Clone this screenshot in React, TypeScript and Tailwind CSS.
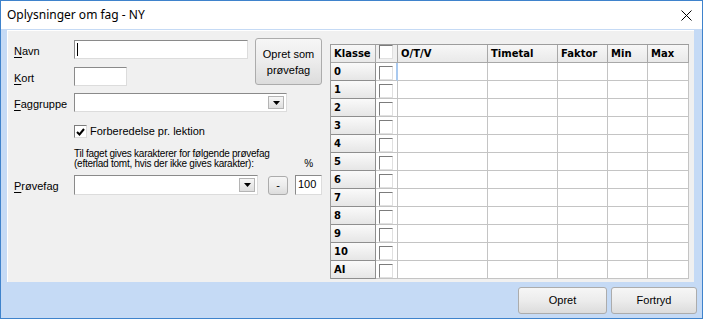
import type { ReactNode } from 'react'

const ROWS = ['0', '1', '2', '3', '4', '5', '6', '7', '8', '9', '10', 'AI']

// column widths in px, right border included
const COLS = [
  { label: 'Klasse', w: 'w-[45px]' },
  { label: '', w: 'w-[22px]' },
  { label: 'O/T/V', w: 'w-[90px]' },
  { label: 'Timetal', w: 'w-[70px]' },
  { label: 'Faktor', w: 'w-[50px]' },
  { label: 'Min', w: 'w-[40px]' },
  { label: 'Max', w: 'w-[41px]' },
]

function Label({ k, rest }: { k: string; rest: string }) {
  return (
    <span className="w-[60px] shrink-0 pt-[3px] text-[11px] text-black">
      <span className="underline underline-offset-[2px]">{k}</span>
      {rest}
    </span>
  )
}

function Sunken({ className, children }: { className: string; children?: ReactNode }) {
  return (
    <div
      className={`bg-white border border-[#dcdcdc] border-t-[#8a8a8a] border-l-[#8a8a8a] ${className}`}
    >
      {children}
    </div>
  )
}

function Arrow() {
  return (
    <svg width="7" height="4" viewBox="0 0 7 4">
      <polygon points="0,0 7,0 3.5,4" fill="#000" />
    </svg>
  )
}

function Combo({ className }: { className: string }) {
  return (
    <Sunken className={`flex justify-end items-stretch p-[2px] ${className}`}>
      <div className="w-[16px] flex items-center justify-center border border-[#b4b4b4] bg-gradient-to-b from-[#f7f7f7] to-[#dedede]">
        <Arrow />
      </div>
    </Sunken>
  )
}

function WinButton({ className, children }: { className: string; children: ReactNode }) {
  return (
    <div
      className={`flex items-center justify-center text-center rounded-[3px] border border-[#acacac] bg-gradient-to-b from-[#f6f6f6] via-[#ececec] to-[#dcdcdc] text-[11px] text-black ${className}`}
    >
      {children}
    </div>
  )
}

function GridBox({ focus }: { focus?: boolean }) {
  return (
    <div
      className={`w-[22px] h-[18px] shrink-0 border-b border-r ${
        focus ? 'border-r-[#a9c9ef] border-r-2' : 'border-r-[#c4c4c4]'
      } border-b-[#c4c4c4] bg-white pl-[3px] pt-[3px]`}
    >
      <div className="w-[14px] h-[14px] bg-white border border-[#e0e0e0] border-t-[#7c7c7c] border-l-[#7c7c7c]" />
    </div>
  )
}

export default function App() {
  return (
    <div
      className="w-[703px] h-[319px] bg-[#c5daf5] border border-[#3f83cc] flex flex-col overflow-hidden"
      style={{ fontFamily: '"Liberation Sans", Arial, sans-serif' }}
    >
      {/* Title bar */}
      <div className="h-[28px] shrink-0 bg-white flex items-center justify-between pl-[6px] pr-[10px]">
        <span className="text-[12px] text-black" style={{ fontFamily: '"Noto Sans", sans-serif' }}>
          Oplysninger om fag - NY
        </span>
        <svg width="11" height="11" viewBox="0 0 11 11">
          <path d="M0.5 0.5 L10.5 10.5 M10.5 0.5 L0.5 10.5" stroke="#000" strokeWidth="1" />
        </svg>
      </div>

      {/* Main panel */}
      <div className="mt-[1px] ml-[6px] w-[687px] h-[252px] shrink-0 bg-[#f0f0f0] border-t border-l border-white flex pl-[6px]">
        {/* Form */}
        <div className="w-[316px] shrink-0 flex flex-col pt-[9px]">
          <div className="flex items-start">
            <div className="flex flex-col">
              <div className="flex h-[19px]">
                <Label k="N" rest="avn" />
                <Sunken className="w-[174px] h-[19px] pl-[2px] pt-[2px]">
                  <div className="w-px h-[13px] bg-black" />
                </Sunken>
              </div>
              <div className="flex h-[19px] mt-[8px]">
                <Label k="K" rest="ort" />
                <Sunken className="w-[53px] h-[19px]" />
              </div>
            </div>
            <WinButton className="ml-[7px] -mt-[2px] w-[67px] h-[47px] leading-[16px]">
              Opret som
              <br />
              prøvefag
            </WinButton>
          </div>

          <div className="flex h-[19px] mt-[7px]">
            <Label k="F" rest="aggruppe" />
            <Combo className="w-[213px] h-[19px]" />
          </div>

          <div className="flex items-center mt-[13px] ml-[60px] h-[13px]">
            <div className="w-[13px] h-[13px] bg-white border border-[#dcdcdc] border-t-[#7c7c7c] border-l-[#7c7c7c] flex items-center justify-center">
              <svg width="9" height="8" viewBox="0 0 9 8">
                <path d="M1 4 L3.5 6.5 L8 1" stroke="#000" strokeWidth="2" fill="none" />
              </svg>
            </div>
            <span className="ml-[3px] text-[11px] text-black">Forberedelse pr. lektion</span>
          </div>

          <div className="mt-[11px] ml-[60px] w-[239px] text-[10px] leading-[10px] text-black tracking-[-0.25px]">
            <div>Til faget gives karakterer for følgende prøvefag</div>
            <div className="flex justify-between">
              <span>(efterlad tomt, hvis der ikke gives karakter):</span>
              <span>%</span>
            </div>
          </div>

          <div className="flex h-[20px] mt-[6px]">
            <Label k="P" rest="røvefag" />
            <Combo className="w-[184px] h-[20px]" />
            <WinButton className="ml-[10px] mt-[1px] w-[20px] h-[19px] rounded-[2px]">-</WinButton>
            <Sunken className="ml-[7px] w-[27px] h-[20px] text-[11px] leading-[16px] pl-[2px] text-black">
              100
            </Sunken>
          </div>
        </div>

        {/* Grid */}
        <div
          className="mt-[13px] w-[359px] h-[235px] border-t border-l border-[#9c9c9c] flex flex-col bg-white text-[10px] font-bold text-black"
          style={{ fontFamily: '"DejaVu Sans", Verdana, sans-serif' }}
        >
          <div className="flex h-[18px]">
            {COLS.map((c, i) =>
              i === 1 ? (
                <div
                  key={i}
                  className="w-[22px] h-[18px] shrink-0 border-r border-b border-[#a8a8a8] bg-[#f0f0f0] pl-[3px]"
                >
                  <div className="w-[14px] h-[14px] bg-white border border-[#e0e0e0] border-t-[#7c7c7c] border-l-[#7c7c7c]" />
                </div>
              ) : (
                <div
                  key={i}
                  className={`${c.w} h-[18px] shrink-0 border-r border-b border-[#a8a8a8] bg-gradient-to-b from-[#f7f7f7] to-[#e9e9e9] pl-[3px] leading-[17px]`}
                >
                  {c.label}
                </div>
              ),
            )}
          </div>
          {ROWS.map((r, ri) => (
            <div key={r} className="flex h-[18px]">
              <div className="w-[45px] h-[18px] shrink-0 border-r border-b border-[#8e8e8e] bg-gradient-to-b from-[#fafafa] to-[#e6e6e6] pl-[3px] leading-[17px]">
                {r}
              </div>
              <GridBox focus={ri === 0} />
              {COLS.slice(2).map((c, ci) => (
                <div key={ci} className={`${c.w} h-[18px] shrink-0 border-r border-b border-[#c4c4c4]`} />
              ))}
            </div>
          ))}
        </div>
      </div>

      {/* Bottom buttons */}
      <div className="flex justify-end gap-[4px] pr-[5px] pt-[5px]">
        <WinButton className="w-[89px] h-[27px]">Opret</WinButton>
        <WinButton className="w-[86px] h-[27px]">Fortryd</WinButton>
      </div>
    </div>
  )
}
